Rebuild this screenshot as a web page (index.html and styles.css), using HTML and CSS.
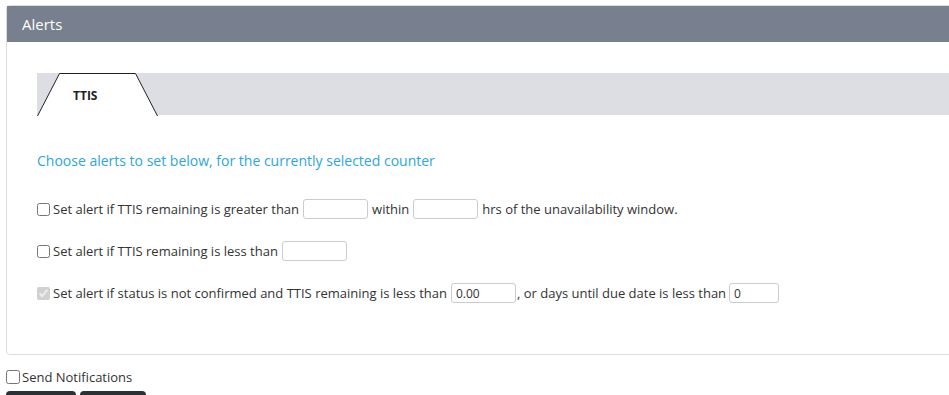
FILE: index.html
```html
<!DOCTYPE html>
<html lang="en">
<head>
    <meta charset="UTF-8">
    <meta name="viewport" content="width=device-width, initial-scale=1.0">
    <title>Alerts</title>
    <link rel="stylesheet" href="styles.css">
</head>
<body>
    <div class="panel">
        <div class="panel-heading">Alerts</div>
        <div class="panel-body">
            <div class="tab-strip">
                <div class="tab">
                    <svg class="tab-shape" width="121" height="43" viewBox="0 0 121 43">
                        <polygon points="0.5,43 22.5,0.5 98.5,0.5 120.5,43" fill="#fff" stroke="none"/>
                        <polyline points="0.5,43 22.5,0.5 98.5,0.5 120.5,43" fill="none" stroke="#222" stroke-width="1"/>
                    </svg>
                    <span class="tab-label">TTIS</span>
                </div>
            </div>

            <p class="hint">Choose alerts to set below, for the currently selected counter</p>

            <div class="alert-row">
                <input type="checkbox" id="greaterThan">
                <label for="greaterThan">Set alert if TTIS remaining is greater than</label>
                <input type="text" class="field">
                <span>within</span>
                <input type="text" class="field">
                <span>hrs of the unavailability window.</span>
            </div>

            <div class="alert-row">
                <input type="checkbox" id="lessThan">
                <label for="lessThan">Set alert if TTIS remaining is less than</label>
                <input type="text" class="field">
            </div>

            <div class="alert-row">
                <input type="checkbox" id="notConfirmed" checked disabled>
                <label for="notConfirmed">Set alert if status is not confirmed and TTIS remaining is less than</label>
                <input type="text" class="field tight" value="0.00">
                <span>, or days until due date is less than</span>
                <input type="text" class="field small" value="0">
            </div>
        </div>
    </div>

    <div class="notify">
        <input type="checkbox" id="sendNotifications">
        <label for="sendNotifications">Send Notifications</label>
    </div>

    <div class="actions">
        <button type="button">Save</button>
        <button type="button">Cancel</button>
    </div>
</body>
</html>
```

FILE: styles.css
```css
html {
    overflow: hidden;
}
body {
    font-family: "Open Sans", Arial, sans-serif;
    font-size: 13px;
    color: #333;
    margin: 0;
    padding: 5px 0 0 6px;
}
.panel {
    width: 970px;
    border: 1px solid #ddd;
    border-radius: 4px 0 0 4px;
    background-color: #fff;
}
.panel-heading {
    height: 36px;
    line-height: 36px;
    padding-left: 15px;
    background-color: #787f8e;
    color: #fff;
    font-size: 15px;
}
.panel-body {
    padding: 31px 0 50px 30px;
}
.tab-strip {
    height: 42px;
    background-color: #dcdee4;
}
.tab {
    position: relative;
    width: 121px;
    height: 42px;
}
.tab-shape {
    position: absolute;
    top: 0;
    left: 0;
}
.tab-label {
    position: relative;
    display: block;
    padding: 14px 0 0 36px;
    font-size: 12px;
    font-weight: bold;
    color: #222;
}
.hint {
    margin: 36px 0 27px;
    font-size: 14px;
    line-height: 20px;
    color: #2ba6de;
}
.alert-row {
    display: flex;
    align-items: center;
    height: 22px;
    margin-bottom: 20px;
}
.alert-row:last-child {
    margin-bottom: 0;
}
input[type="checkbox"] {
    width: 13px;
    height: 13px;
    margin: 0 3px 0 0;
}
.field {
    width: 65px;
    height: 20px;
    box-sizing: border-box;
    margin: 0 4px;
    padding: 1px 4px;
    border: 1px solid #ccc;
    border-radius: 3px;
    font-family: inherit;
    font-size: 12px;
    color: #333;
}
.field.tight {
    margin-right: 1px;
}
.field.small {
    width: 50px;
    margin-left: 3px;
}
.notify {
    display: flex;
    align-items: center;
    margin-top: 13px;
    font-size: 13px;
}
.notify input[type="checkbox"] {
    width: 14px;
    height: 14px;
    margin-right: 2px;
}
.actions {
    display: flex;
    gap: 4px;
    margin-top: 5px;
}
button {
    width: 70px;
    height: 28px;
    border: none;
    border-radius: 4px;
    background-color: #2b2f36;
    color: #fff;
    font-family: inherit;
    font-size: 13px;
}
button + button {
    width: 66px;
}
```
